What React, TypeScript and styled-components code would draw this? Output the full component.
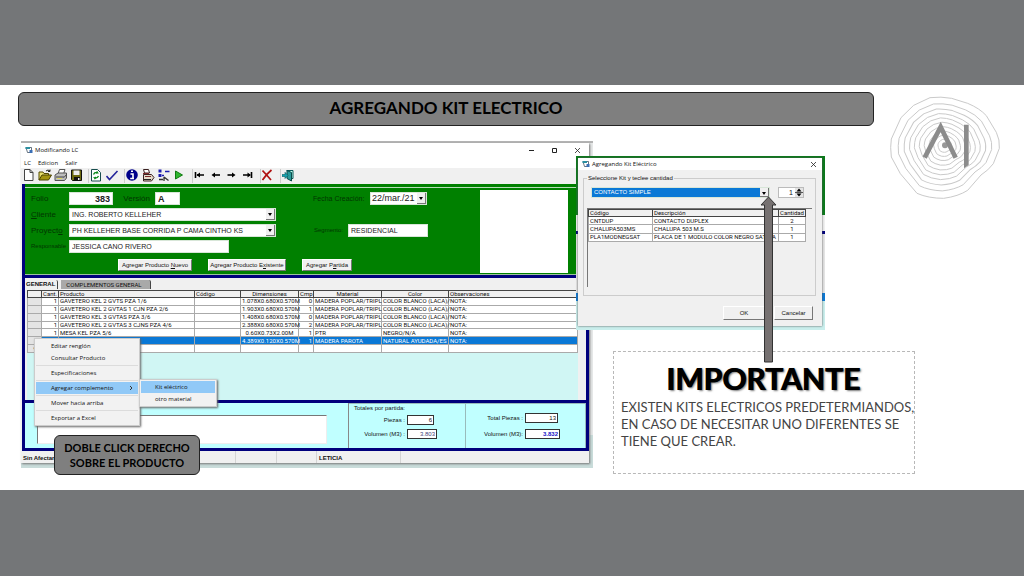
import React from "react";
import styled, { createGlobalStyle, css } from "styled-components";

const compact = `Roboto, "Liberation Sans", Arial, sans-serif`;
const wide = `"Liberation Sans", Arial, sans-serif`;
const system = `"Open Sans", "Noto Sans", sans-serif`;
const slideFont = `Lato, "Open Sans", sans-serif`;

const GlobalStyle = createGlobalStyle`
  *, *::before, *::after { box-sizing: border-box; }
  body { margin: 0; background: #747678; font-family: ${wide}; color: #111; }
  button, input, select { font: inherit; color: inherit; margin: 0; border-radius: 0; }
`;

/* ---------- slide ---------- */

const Page = styled.div`
  min-height: 100vh;
  padding: 85px 0;
  background: #747678;
`;

const Slide = styled.main`
  display: flex;
  flex-direction: column;
  gap: 15px;
  padding: 7px 24px 16px 18px;
  background: #fff;
`;

const TitleRow = styled.header`
  display: flex;
  gap: 5px;
`;

const Banner = styled.h1`
  flex: 1;
  margin: 0;
  height: 34px;
  border: 1px solid #222;
  border-radius: 6px;
  background: #7f7f7f;
  color: #000;
  font: 700 17px/30px ${slideFont};
  text-align: center;
`;

const LogoSlot = styled.div`
  position: relative;
  width: 121px;
`;

const LogoArt = styled.svg`
  position: absolute;
  left: 1px;
  top: -7px;
  width: 130px;
  height: 125px;
`;

const Desk = styled.div`
  position: relative;
  display: flex;
  align-items: flex-start;
  gap: 20px;
  padding: 0 85px 6px 3px;
`;

/* ---------- main window ---------- */

const WindowStack = styled.div`
  position: relative;
  flex: 1;
  min-width: 0;
  border-top: 2px solid #b4b4b4;
  background: linear-gradient(to bottom, #e6e8e8 90%, #c9dcda 90%);
`;

const Window = styled.section`
  margin: 0 4px 5px 0;
  background: #f0f0f0;
  box-shadow: 1px 1px 2px #777;
`;

const TitleBar = styled.div<{ $tall?: boolean }>`
  display: flex;
  align-items: center;
  gap: 2px;
  height: ${(p) => (p.$tall ? 14 : 12)}px;
  padding: 0 ${(p) => (p.$tall ? 7 : 4)}px 0 4px;
  background: #fff;
  font: 400 6px/8px ${system};
`;

const TitleText = styled.span`
  flex: 1;
`;

const WindowControls = styled.div`
  display: flex;
  gap: 14px;
`;

const GlyphButton = styled.button`
  display: block;
  width: 9px;
  height: 9px;
  padding: 0;
  border: 0;
  background: none;
  svg { display: block; width: 9px; height: 9px; }
`;

const MenuBar = styled.nav`
  display: flex;
  gap: 7px;
  height: 11px;
  padding: 0 3px;
  background: #fff;
  font: 400 6px/8px ${system};
`;

const MenuBarItem = styled.button`
  padding: 0;
  border: 0;
  background: none;
`;

const Toolbar = styled.div`
  display: flex;
  gap: 4px;
  height: 16px;
  background: #f0f0f0;
`;

const ToolGroup = styled.div`
  display: flex;
  & + & { box-shadow: -2px 0 0 -1px #ccc; }
`;

const ToolButton = styled.button`
  width: 16px;
  height: 14px;
  padding: 0 1px;
  border: 0;
  background: none;
  svg { display: block; width: 14px; height: 14px; }
`;

const Frame = styled.div`
  margin-left: 1px;
  border: solid #00007c;
  border-width: 0 3px 3px;
`;

const GreenStripe = styled.div`
  height: 4px;
  background: #008000;
  border-bottom: 1px solid #b9dcb9;
`;

const GreenPanel = styled.form`
  display: flex;
  align-items: flex-start;
  justify-content: space-between;
  padding: 2px 18px 1px 6px;
  background: #008000;
  border-bottom: 1px solid #9cc29c;
  color: #003600;
`;

const FormBody = styled.div`
  display: flex;
  flex-direction: column;
  gap: 6px;
  padding-top: 2px;
`;

const FieldColumns = styled.div`
  display: flex;
  gap: 37px;
`;

const FieldStack = styled.div<{ $gap: number }>`
  display: flex;
  flex-direction: column;
  gap: ${(p) => p.$gap}px;
`;

const FieldRow = styled.div`
  display: flex;
  align-items: center;
  gap: 5px;
  height: 13px;
`;

const FieldLabel = styled.label<{ $w: number; $size?: number; $right?: boolean }>`
  width: ${(p) => p.$w}px;
  font: 400 ${(p) => p.$size || 8}px/13px ${wide};
  white-space: nowrap;
  text-align: ${(p) => (p.$right ? "right" : "left")};
  u { text-underline-offset: 1px; }
`;

const TextBox = styled.input<{ $w: number; $bold?: boolean; $right?: boolean }>`
  width: ${(p) => p.$w}px;
  height: 13px;
  padding: 0 2px;
  border: 1px solid #d8e6d8;
  background: #fff;
  color: #222;
  font: ${(p) => (p.$bold ? "700 9px" : "400 7px")}/11px ${wide};
  text-align: ${(p) => (p.$right ? "right" : "left")};
`;

const SelectShell = styled.span<{ $w: number }>`
  position: relative;
  display: block;
  width: ${(p) => p.$w}px;
  &::after {
    content: "";
    position: absolute;
    right: 4px;
    top: 5px;
    border: 2px solid transparent;
    border-top: 3px solid #000;
    border-bottom: 0;
    pointer-events: none;
  }
  &::before {
    content: "";
    position: absolute;
    right: 1px;
    top: 1px;
    bottom: 1px;
    width: 9px;
    border: solid #777;
    border-width: 0 1px 1px 0;
    background: #f0f0f0;
    pointer-events: none;
  }
`;

const SelectBox = styled.select<{ $big?: boolean; $active?: boolean }>`
  display: block;
  appearance: none;
  width: 100%;
  height: ${(p) => (p.$active ? 11 : 13)}px;
  padding: 0 10px 0 ${(p) => (p.$big ? 1 : 2)}px;
  border: 1px solid #d8e6d8;
  background: ${(p) => (p.$active ? "#0a78d6" : "#fff")};
  color: ${(p) => (p.$active ? "#fff" : "#222")};
  font: 400 ${(p) => (p.$big ? 9 : p.$active ? 6 : 7)}px/${(p) => (p.$active ? 9 : 11)}px ${wide};
`;

const ButtonRow = styled.div`
  display: flex;
  gap: 16px;
  padding-left: 87px;
`;

const PushButton = styled.button<{ $w: number; $tall?: boolean }>`
  width: ${(p) => p.$w}px;
  height: ${(p) => (p.$tall ? 14 : 12)}px;
  padding: 0;
  border: 1px solid;
  border-color: #fff #777 #777 #fff;
  background: #f0f0f0;
  color: #111;
  font: 400 6px/10px ${wide};
  white-space: nowrap;
`;

const Photo = styled.div`
  width: 88px;
  height: 83px;
  background: #fff;
`;

const TabStrip = styled.div`
  display: flex;
  align-items: flex-start;
  gap: 3px;
  height: 15px;
  padding: 2px 0 0 1px;
  border-top: 3px solid #00007c;
  background: #f0f0f0;
`;

const Tab = styled.button<{ $on?: boolean }>`
  height: 9px;
  padding: 0 ${(p) => (p.$on ? 2 : 8)}px 0 ${(p) => (p.$on ? 0 : 5)}px;
  border: 0;
  border-right: 1px solid #444;
  border-radius: 0 2px 0 0;
  background: ${(p) => (p.$on ? "#f0f0f0" : "#a9a9a9")};
  font: ${(p) => (p.$on ? "700 6px" : "400 6px")}/9px ${(p) => (p.$on ? wide : compact)};
`;

const GridPane = styled.div`
  min-height: 110px;
  margin: 0 8px 0 2px;
  background: #d0f6f4;
`;

const DataTable = styled.table<{ $h: number }>`
  width: 100%;
  height: ${(p) => p.$h}px;
  table-layout: fixed;
  border-collapse: collapse;
  background: #fff;
  font: 400 6px/6px ${compact};
  color: #111;
  th, td {
    height: 7px;
    padding: 0 1px;
    white-space: nowrap;
    border: 1px solid #aaa;
    line-height: 6px;
  }
  th {
    border-color: #444;
    background: #f0f0f0;
    font-weight: 400;
  }
`;

const Cell = styled.td<{ $align?: "left" | "right" | "center" }>`
  text-align: ${(p) => p.$align || "left"};
`;

const HeadCell = styled.th<{ $align?: "left" | "right" | "center" }>`
  text-align: ${(p) => p.$align || "left"};
`;

const Gutter = styled.td`
  background: #e4e4e4;
  color: #111;
  text-align: center;
`;

const Row = styled.tr<{ $selected?: boolean }>`
  ${(p) =>
    p.$selected &&
    css`
      background: #0a78d6;
      color: #fff;
    `}
`;

const Totals = styled.div`
  display: flex;
  height: 48px;
  border-top: 3px solid #00007c;
  background: #c0ffff;
`;

const NotesArea = styled.div`
  flex: 1;
  min-width: 0;
  padding: 12px 21px 2px 12px;
  border-right: 1px solid #888;
`;

const NotesBox = styled.textarea`
  display: block;
  width: 100%;
  height: 29px;
  border: 1px solid;
  border-color: #777 #eee #eee #777;
  background: #fff;
  resize: none;
`;

const TotalsGroup = styled.div<{ $w: number; $top: number; $gap: number }>`
  position: relative;
  display: flex;
  flex-direction: column;
  gap: ${(p) => p.$gap}px;
  width: ${(p) => p.$w}px;
  padding-top: ${(p) => p.$top}px;
  border-top: 1px solid #9bb;
  border-right: 1px solid #9bb;
`;

const GroupCaption = styled.span`
  position: absolute;
  left: 5px;
  top: 0;
  padding-right: 4px;
  background: #c0ffff;
  font: 400 6px/8px ${wide};
`;

const TotalRow = styled.label<{ $label: number }>`
  display: grid;
  grid-template-columns: ${(p) => p.$label}px auto;
  justify-content: start;
  align-items: center;
  gap: 2px;
  font: 400 6px/10px ${wide};
  text-align: right;
  white-space: nowrap;
`;

const TotalValue = styled.input<{ $w: number; $tone?: string }>`
  width: ${(p) => p.$w}px;
  height: 10px;
  padding: 0 1px;
  border: 1px solid #333;
  background: #fff;
  color: ${(p) => p.$tone || "#111"};
  font: ${(p) => (p.$tone === "#1414c8" ? 700 : 400)} 6px/8px ${wide};
  text-align: right;
`;

const StatusBar = styled.footer`
  display: flex;
  height: 12px;
  background: #f0f0f0;
  font: 700 6px/14px ${wide};
`;

const StatusCell = styled.span<{ $w: number }>`
  width: ${(p) => p.$w}px;
  padding-left: 2px;
  border-right: 1px solid #d4d4d4;
`;

/* ---------- overlays ---------- */

const Popup = styled.ul<{ $left: number; $top: number; $w: number }>`
  position: absolute;
  left: ${(p) => p.$left}px;
  top: ${(p) => p.$top}px;
  width: ${(p) => p.$w}px;
  margin: 0;
  padding: 1px;
  list-style: none;
  border: 1px solid #ccc;
  background: #f2f2f2;
  box-shadow: 1px 1px 2px #666;
`;

const PopupItem = styled.li<{ $line?: boolean }>`
  ${(p) => p.$line && css`margin-top: 1px; padding-top: 1px; border-top: 1px solid #dcdcdc;`}
`;

const PopupButton = styled.button<{ $on?: boolean; $inset: number }>`
  display: flex;
  justify-content: space-between;
  width: 100%;
  height: 12px;
  padding: 0 5px 0 ${(p) => p.$inset}px;
  border: 0;
  background: ${(p) => (p.$on ? "#91c9f7" : "transparent")};
  font: 400 6px/12px ${system};
  white-space: nowrap;
  svg { width: 4px; height: 12px; }
`;

const Callout = styled.p`
  position: absolute;
  left: 36px;
  top: 294px;
  width: 146px;
  margin: 0;
  padding: 4px 0;
  border: 1px solid #222;
  border-radius: 6px;
  background: #7f7f7f;
  color: #000;
  font: 700 11px/15px ${slideFont};
  text-align: center;
`;

const DialogBackdrop = styled.div`
  position: absolute;
  right: 175px;
  top: 15px;
  width: 249px;
  padding: 2px 3px 4px 2px;
  background: linear-gradient(
    to bottom,
    #0a7a1a 0 59px, #f0f0f0 59px 75px, #00007c 75px 78px, #e4e4e4 78px 137px,
    #0a78d6 137px 145px, #c9eeec 145px
  );
`;

const Dialog = styled.section`
  background: #f0f0f0;
  box-shadow: 0 0 2px #555;
`;

const DialogBody = styled.div`
  padding: 4px 6px 6px 5px;
`;

const KitGroup = styled.fieldset`
  margin: 0;
  padding: 5px 3px 8px 3px;
  border: 1px solid #ccc;
  min-width: 0;
  legend {
    padding: 0 1px;
    font: 400 6px/8px ${wide};
  }
`;

const KitRow = styled.div`
  display: flex;
  justify-content: space-between;
  padding: 0 8px 10px 4px;
`;

const Spinner = styled.span`
  position: relative;
  display: block;
  svg { position: absolute; right: 1px; top: 1px; width: 8px; height: 9px; }
`;

const SpinInput = styled.input`
  display: block;
  width: 26px;
  height: 11px;
  padding: 0 10px 0 0;
  border: 1px solid #bbb;
  background: #fff;
  font: 400 7px/9px ${wide};
  text-align: right;
`;

const KitList = styled.div`
  height: 79px;
  padding-right: 6px;
  border: solid #777;
  border-width: 1px 0 0 1px;
`;

const DialogActions = styled.div`
  display: flex;
  justify-content: flex-end;
  gap: 9px;
  padding: 10px 3px 0;
`;

const ArrowArt = styled.svg`
  position: absolute;
  right: 223px;
  top: 55px;
  width: 17px;
  height: 167px;
`;

const Note = styled.aside`
  align-self: flex-end;
  width: 302px;
  margin-bottom: -6px;
  padding: 5px 0 23px 7px;
  border: 1px dashed #b8b8b8;
  color: #444;
  font: 400 13px/17px ${slideFont};
`;

const NoteTitle = styled.h2`
  margin: 0 9px 0 0;
  color: #000;
  font: 700 30px/42px ${slideFont};
  text-align: center;
  text-shadow: 1px 0 0 #000, 2px 1px 2px #777;
`;

const NoteText = styled.p`
  margin: 0;
  white-space: nowrap;
`;

/* ---------- drawings ---------- */

const ringScales = [1, 0.86, 0.75, 0.65, 0.56, 0.47, 0.38, 0.29, 0.21, 0.13];

const Logo = () => (
  <LogoArt viewBox="0 0 390 375" role="img" aria-label="AI">
    {ringScales.map((s, i) => (
      <path
        key={s}
        d="M-45 -144 Q-12 -148 20 -142 L68 -127 Q104 -112 124 -90 L154 -40 Q165 -18 163 8 L145 54 Q130 74 108 88 L68 134 Q40 152 -4 158 Q-50 158 -84 143 L-134 84 L-161 34 Q-165 4 -161 -20 L-132 -84 L-94 -121 Z"
        transform={`translate(195 182) rotate(${i * 2}) scale(${s})`}
        fill="none"
        stroke="#cacaca"
        strokeWidth="1"
        vectorEffect="non-scaling-stroke"
      />
    ))}
    <circle cx="195" cy="181" r="9" fill="#999" />
    <path d="M134 218 L182 126 L227 218" fill="none" stroke="#8c8c8c" strokeWidth="14" />
    <path d="M252 119 H266 V240 L252 250 Z" fill="#8c8c8c" />
  </LogoArt>
);

const AppIcon = () => (
  <svg width="8" height="8" viewBox="0 0 16 16" aria-hidden="true">
    <path d="M2 3h11v10H5z" fill="#fff" stroke="#345" strokeWidth="1.5" />
    <path d="M1 2h9v4H1z" fill="#2b8fa0" />
    <path d="M9 8h6v6H9z" fill="#3b6fb5" />
  </svg>
);

const CloseGlyph = () => (
  <svg viewBox="0 0 9 9"><path d="M2 2l5 5M7 2l-5 5" stroke="#222" strokeWidth=".8" /></svg>
);

const Icon = ({ children }: { children: React.ReactNode }) => (
  <svg viewBox="0 0 14 14" fill="none" aria-hidden="true">{children}</svg>
);

const arrowHead = { stroke: "#000", strokeWidth: 1.6 };

const toolGroups: { name: string; art: React.ReactNode }[][] = [
  [
    { name: "Nuevo", art: <path d="M2.500 1.500h5.500l3 3v8H2.500z M8 1.500v3h3" fill="#fff" stroke="#444" /> },
    {
      name: "Abrir",
      art: (
        <>
          <path d="M1 12V4h4l1 1.5h4.500V7" fill="#e8e070" stroke="#554a00" />
          <path d="M1 12l3-5h9.500l-3 5z" fill="#a39410" stroke="#4a4200" />
          <path d="M8 3q2-2 4 0m0-1.500v2h-2" stroke="#222" />
        </>
      ),
    },
    {
      name: "Imprimir",
      art: (
        <>
          <path d="M4 6l1.500-4.500h5.500L9.500 6" fill="#fff" stroke="#555" />
          <path d="M1 7l3-2h8.500v5l-2 2.500H1z" fill="#bcbcbc" stroke="#555" />
          <path d="M2 9h8M10 9.500l2.500-3" stroke="#444" />
          <path d="M3 10.500h5" stroke="#dcd860" />
        </>
      ),
    },
    {
      name: "Guardar",
      art: (
        <>
          <path d="M1.500 2h10v10.500h-9L1.500 11.500z" fill="#6d6a10" stroke="#111" />
          <path d="M3.500 2.500h6V7h-6z" fill="#eee" />
          <path d="M4 9h6v3.500H4z" fill="#111" />
          <path d="M8 10h1.500v2H8z" fill="#eee" />
        </>
      ),
    },
  ],
  [
    {
      name: "Actualizar",
      art: (
        <>
          <path d="M1.500 1.500h6l3 3v8.500h-9z" fill="#fff" stroke="#174d4d" />
          <path d="M3.500 6.500q1-2.500 4-2l-.8-1.200M7.500 4.500l-1.200 1M8.500 8q-1 2.500-4 2l.8 1.200M4.500 10l1.200-1" stroke="#0a8a1a" strokeWidth="1.300" />
        </>
      ),
    },
    { name: "Aceptar", art: <path d="M.5 8l3 3.500L11.500 3" stroke="#23239a" strokeWidth="1.600" /> },
  ],
  [
    {
      name: "Información",
      art: (
        <>
          <circle cx="6" cy="7" r="5.800" fill="#00008a" />
          <path d="M5 3.200h2M4.500 6H7v4.500M4.200 10.500h3.800" stroke="#fff" strokeWidth="1.600" />
        </>
      ),
    },
    {
      name: "Reporte",
      art: (
        <>
          <path d="M1.500 1.500h5l1 3.500H2.500z" fill="#fff" stroke="#3a2020" />
          <path d="M1.500 6.500h8l2.500 3-2.500 3.500h-8z" fill="#e4dccb" stroke="#3a2020" />
          <path d="M1 5.500h6M3 8.500h6" stroke="#7a2a2a" />
          <path d="M2 11.500h7" stroke="#222" />
        </>
      ),
    },
    {
      name: "Estructura",
      art: (
        <>
          <path d="M.5 1.500h3v3h-3zM.5 6h3v3h-3z" fill="#1c1cb0" />
          <path d="M4 7.500h2m1-4h4.500" stroke="#1c1cb0" strokeWidth="1.500" />
          <path d="M1 11.500h4M6 9l4.500 3.500M6 9v4" stroke="#333" strokeWidth="1.300" />
        </>
      ),
    },
    { name: "Ejecutar", art: <path d="M1.500 3l7 4-7 4z" fill="#2fb72f" stroke="#127a12" /> },
  ],
  [
    { name: "Primero", art: <><path d="M1.500 4v6M3 7h7" {...arrowHead} /><path d="M2.500 7L6 4.500v5z" fill="#000" /></> },
    { name: "Anterior", art: <><path d="M4 7h6" {...arrowHead} /><path d="M1.500 7L5 4.500v5z" fill="#000" /></> },
    { name: "Siguiente", art: <><path d="M1.500 7h6" {...arrowHead} /><path d="M9.500 7L6 4.500v5z" fill="#000" /></> },
    { name: "Último", art: <><path d="M9.500 4v6M1 7h7" {...arrowHead} /><path d="M9 7L5.500 4.500v5z" fill="#000" /></> },
  ],
  [{ name: "Eliminar", art: <path d="M.5 2.500Q4 6 9 12M9.500 2Q4.500 6 .5 12" stroke="#b01010" strokeWidth="1.700" /> }],
  [
    {
      name: "Salir",
      art: (
        <>
          <path d="M4.500 2.500H11v8H9.500" fill="#bfe" stroke="#0a5a5a" />
          <path d="M5 2.500l4.500 2v8.500L5 10.500z" fill="#2a9a9a" stroke="#0a4a4a" />
          <path d="M0 6.500h3V4.300L6 7.500l-3 3V8.500H0z" fill="#13a3b0" stroke="#075a60" strokeWidth=".6" />
        </>
      ),
    },
  ],
];

/* ---------- data ---------- */

const poplar = "MADERA POPLAR/TRIPL";
const blanco = "COLOR BLANCO (LACA)/";
const items = [
  ["1", "GAVETERO KEL 2 GVTS PZA 1/6", "1.078X0.680X0.570M", "0", poplar, blanco],
  ["1", "GAVETERO KEL 2 GVTAS 1 CJN PZA 2/6", "1.903X0.680X0.570M", "1", poplar, blanco],
  ["1", "GAVETERO KEL 3 GVTAS PZA 3/6", "1.408X0.680X0.570M", "0", poplar, blanco],
  ["1", "GAVETERO KEL 2 GVTAS 3 CJNS PZA 4/6", "2.388X0.680X0.570M", "2", poplar, blanco],
  ["1", "MESA KEL PZA 5/6", "0.60X0.73X2.00M", "1", "PTR", "NEGRO/N/A"],
  ["1", "CUBIERTA KEL PZA 6/6", "4.389X0.120X0.570M", "1", "MADERA PAROTA", "NATURAL AYUDADA/ES"],
];

const kitParts = [
  ["CNTDUP", "CONTACTO DUPLEX", "2"],
  ["CHALUPA503MS", "CHALUPA 503  M.S", "1"],
  ["PLA1MODNEGSAT", "PLACA DE 1 MODULO COLOR NEGRO SATINA", "1"],
];

const productMenu = [
  { text: "Editar renglón" },
  { text: "Consultar Producto" },
  { text: "Especificaciones", line: true },
  { text: "Agregar complemento", line: true, on: true },
  { text: "Mover hacia arriba", line: true },
  { text: "Exportar a Excel", line: true },
];

/* ---------- parts ---------- */

const OrderForm = () => (
  <GreenPanel>
    <FormBody>
      <FieldColumns>
        <FieldStack $gap={3}>
          <FieldRow>
            <FieldLabel $w={33} htmlFor="folio">Folio</FieldLabel>
            <TextBox id="folio" $w={44} $bold $right defaultValue="383" />
            <FieldLabel $w={32} $right htmlFor="version">Versión</FieldLabel>
            <TextBox id="version" $w={25} $bold defaultValue="A" />
          </FieldRow>
          <FieldRow>
            <FieldLabel $w={33} htmlFor="cliente"><u>C</u>liente</FieldLabel>
            <SelectShell $w={207}>
              <SelectBox id="cliente"><option>ING. ROBERTO KELLEHER</option></SelectBox>
            </SelectShell>
          </FieldRow>
          <FieldRow>
            <FieldLabel $w={33} htmlFor="proyecto">Proyect<u>o</u></FieldLabel>
            <SelectShell $w={207}>
              <SelectBox id="proyecto"><option>PH KELLEHER BASE CORRIDA P CAMA CINTHO KS</option></SelectBox>
            </SelectShell>
          </FieldRow>
          <FieldRow>
            <FieldLabel $w={33} $size={6} htmlFor="responsable">Responsable</FieldLabel>
            <TextBox id="responsable" $w={160} defaultValue="JESSICA CANO RIVERO" />
          </FieldRow>
        </FieldStack>
        <FieldStack $gap={19}>
          <FieldRow>
            <FieldLabel $w={52} $size={7} htmlFor="fecha">Fecha Creación:</FieldLabel>
            <SelectShell $w={57}>
              <SelectBox id="fecha" $big><option>22/mar./21</option></SelectBox>
            </SelectShell>
          </FieldRow>
          <FieldRow>
            <FieldLabel $w={30} $size={6} $right htmlFor="segmento">Segmento:</FieldLabel>
            <TextBox id="segmento" $w={80} defaultValue="RESIDENCIAL" />
          </FieldRow>
        </FieldStack>
      </FieldColumns>
      <ButtonRow>
        <PushButton type="button" $w={74}>Agregar Producto <u>N</u>uevo</PushButton>
        <PushButton type="button" $w={78}>Agregar Producto E<u>x</u>istente</PushButton>
        <PushButton type="button" $w={50}>Agregar P<u>a</u>rtida</PushButton>
      </ButtonRow>
    </FormBody>
    <Photo />
  </GreenPanel>
);

const ProductGrid = () => (
  <GridPane>
    <DataTable $h={63}>
      <colgroup>
        {[14, 17, 136, 46, 58, 15, 68, 67].map((w, i) => <col key={i} width={w} />)}
        <col />
      </colgroup>
      <thead>
        <tr>
          <HeadCell />
          <HeadCell $align="center">Cant.</HeadCell>
          <HeadCell>Producto</HeadCell>
          <HeadCell>Código</HeadCell>
          <HeadCell $align="center">Dimensiones</HeadCell>
          <HeadCell $align="center">Cmp</HeadCell>
          <HeadCell $align="center">Material</HeadCell>
          <HeadCell $align="center">Color</HeadCell>
          <HeadCell>Observaciones</HeadCell>
        </tr>
      </thead>
      <tbody>
        {items.map((r, i) => (
          <Row key={r[1]} $selected={i === 5}>
            <Gutter />
            <Cell $align="right">{r[0]}</Cell>
            <Cell>{r[1]}</Cell>
            <Cell />
            <Cell $align="center">{r[2]}</Cell>
            <Cell $align="right">{r[3]}</Cell>
            <Cell>{r[4]}</Cell>
            <Cell>{r[5]}</Cell>
            <Cell>NOTA:</Cell>
          </Row>
        ))}
        <Row>
          <Gutter>*</Gutter>
          {Array.from({ length: 8 }, (_, i) => <Cell key={i} />)}
        </Row>
      </tbody>
    </DataTable>
  </GridPane>
);

const KitDialog = () => (
  <DialogBackdrop>
    <Dialog role="dialog" aria-label="Agregando Kit Eléctrico">
      <TitleBar>
        <AppIcon />
        <TitleText>Agregando Kit Eléctrico</TitleText>
        <GlyphButton aria-label="Cerrar"><CloseGlyph /></GlyphButton>
      </TitleBar>
      <DialogBody>
        <KitGroup>
          <legend>Seleccione Kit y teclee cantidad</legend>
          <KitRow>
            <SelectShell $w={179}>
              <SelectBox $active aria-label="Kit"><option>CONTACTO SIMPLE</option></SelectBox>
            </SelectShell>
            <Spinner>
              <SpinInput aria-label="Cantidad" defaultValue="1" />
              <svg viewBox="0 0 8 9" aria-hidden="true">
                <path d="M0 0h8v9H0z" fill="#e4e4e4" />
                <path d="M0 4.500h8" stroke="#555" />
                <path d="M4 .5L6.500 3.500h-5zM4 8.500L1.500 5.500h5z" fill="#000" />
              </svg>
            </Spinner>
          </KitRow>
          <KitList>
            <DataTable $h={33}>
              <colgroup>
                <col width="64" />
                <col />
                <col width="27" />
              </colgroup>
              <thead>
                <tr>
                  <HeadCell>Código</HeadCell>
                  <HeadCell>Descripción</HeadCell>
                  <HeadCell>Cantidad</HeadCell>
                </tr>
              </thead>
              <tbody>
                {kitParts.map((k) => (
                  <Row key={k[0]}>
                    <Cell>{k[0]}</Cell>
                    <Cell>{k[1]}</Cell>
                    <Cell $align="center">{k[2]}</Cell>
                  </Row>
                ))}
              </tbody>
            </DataTable>
          </KitList>
        </KitGroup>
        <DialogActions>
          <PushButton $w={42} $tall>OK</PushButton>
          <PushButton $w={39} $tall>Cancelar</PushButton>
        </DialogActions>
      </DialogBody>
    </Dialog>
  </DialogBackdrop>
);

export default function App() {
  return (
    <Page>
      <GlobalStyle />
      <Slide>
        <TitleRow>
          <Banner>AGREGANDO KIT ELECTRICO</Banner>
          <LogoSlot><Logo /></LogoSlot>
        </TitleRow>
        <Desk>
          <WindowStack>
            <Window>
              <TitleBar $tall>
                <AppIcon />
                <TitleText>Modificando LC</TitleText>
                <WindowControls>
                  <GlyphButton aria-label="Minimizar">
                    <svg viewBox="0 0 9 9"><path d="M2 4.500h5" stroke="#222" /></svg>
                  </GlyphButton>
                  <GlyphButton aria-label="Maximizar">
                    <svg viewBox="0 0 9 9"><path d="M2.500 2.500h4v4h-4z" fill="none" stroke="#222" /></svg>
                  </GlyphButton>
                  <GlyphButton aria-label="Cerrar ventana"><CloseGlyph /></GlyphButton>
                </WindowControls>
              </TitleBar>
              <MenuBar>
                <MenuBarItem>LC</MenuBarItem>
                <MenuBarItem>Edicion</MenuBarItem>
                <MenuBarItem>Salir</MenuBarItem>
              </MenuBar>
              <Toolbar>
                {toolGroups.map((group, i) => (
                  <ToolGroup key={i}>
                    {group.map((t) => (
                      <ToolButton key={t.name} aria-label={t.name}><Icon>{t.art}</Icon></ToolButton>
                    ))}
                  </ToolGroup>
                ))}
              </Toolbar>
              <Frame>
                <GreenStripe />
                <OrderForm />
                <TabStrip>
                  <Tab $on>GENERAL</Tab>
                  <Tab>COMPLEMENTOS GENERAL</Tab>
                </TabStrip>
                <ProductGrid />
                <Totals>
                  <NotesArea><NotesBox aria-label="Notas" /></NotesArea>
                  <TotalsGroup $w={117} $top={11} $gap={4}>
                    <GroupCaption>Totales por partida:</GroupCaption>
                    <TotalRow $label={56}>Piezas :<TotalValue $w={27} defaultValue="6" /></TotalRow>
                    <TotalRow $label={56}>Volumen (M3) :<TotalValue $w={30} $tone="#44447a" defaultValue="3.803" /></TotalRow>
                  </TotalsGroup>
                  <TotalsGroup $w={120} $top={9} $gap={6}>
                    <TotalRow $label={57}>Total Piezas :<TotalValue $w={33} defaultValue="13" /></TotalRow>
                    <TotalRow $label={57}>Volumen (M3):<TotalValue $w={35} $tone="#1414c8" defaultValue="3.832" /></TotalRow>
                  </TotalsGroup>
                </Totals>
              </Frame>
              <StatusBar>
                <StatusCell $w={215}>Sin Afectar</StatusCell>
                <StatusCell $w={41} />
                <StatusCell $w={40} />
                <StatusCell $w={84}>LETICIA</StatusCell>
              </StatusBar>
            </Window>
            <Popup $left={13} $top={195} $w={106}>
              {productMenu.map((m) => (
                <PopupItem key={m.text} $line={m.line}>
                  <PopupButton $on={m.on} $inset={15}>
                    {m.text}
                    {m.on && (
                      <svg viewBox="0 0 4 12" aria-hidden="true">
                        <path d="M1 4l2 2-2 2" fill="none" stroke="#333" />
                      </svg>
                    )}
                  </PopupButton>
                </PopupItem>
              ))}
            </Popup>
            <Popup $left={118} $top={236} $w={78}>
              <PopupItem><PopupButton $on $inset={14}>Kit eléctrico</PopupButton></PopupItem>
              <PopupItem><PopupButton $inset={14}>otro material</PopupButton></PopupItem>
            </Popup>
          </WindowStack>
          <Note>
            <NoteTitle>IMPORTANTE</NoteTitle>
            <NoteText>
              EXISTEN KITS ELECTRICOS PREDETERMIANDOS,<br />
              EN CASO DE NECESITAR UNO DIFERENTES SE<br />
              TIENE QUE CREAR.
            </NoteText>
          </Note>
          <Callout>
            DOBLE CLICK DERECHO<br />
            SOBRE EL PRODUCTO
          </Callout>
          <KitDialog />
          <ArrowArt viewBox="0 0 17 167" aria-hidden="true">
            <path d="M8.500 1L16 9h-3.500v157h-8V9H1z" fill="#767171" stroke="#333" />
          </ArrowArt>
        </Desk>
      </Slide>
    </Page>
  );
}
